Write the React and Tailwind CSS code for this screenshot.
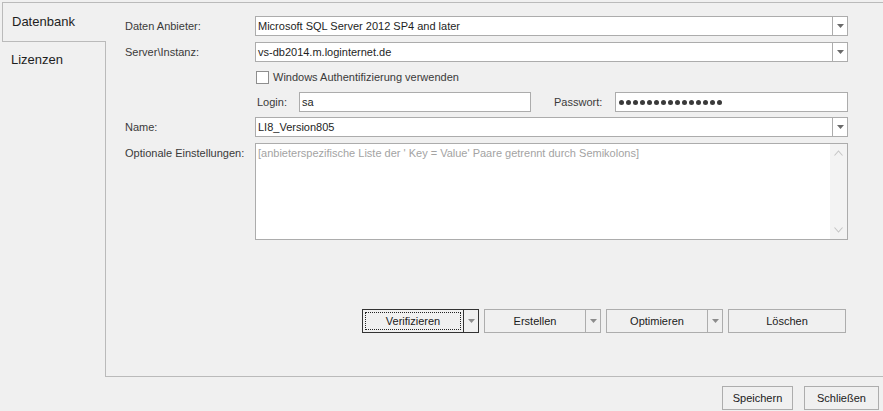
import React from 'react'

// ── kleine Glyphen ───────────────────────────────────────────
function DropArrow({ color = '#6a6a6a' }) {
  return (
    <svg width="7" height="4" viewBox="0 0 7 4" className="block">
      <path d="M0 0 H7 L3.5 4 Z" fill={color} />
    </svg>
  )
}

function Chevron({ up }) {
  return (
    <svg width="9" height="6" viewBox="0 0 9 6" className="block">
      <path d={up ? 'M0.5 5.5 L4.5 1 L8.5 5.5' : 'M0.5 0.5 L4.5 5 L8.5 0.5'} fill="none" stroke="#c6c6c6" strokeWidth="1.1" />
    </svg>
  )
}

// ── Combo-Box ────────────────────────────────────────────────
function Combo({ value }) {
  return (
    <div className="flex h-[20px] w-[593px] border border-[#acacac] bg-white">
      <div className="flex-1 flex items-center pl-[2px] text-[#1e1e1e]">{value}</div>
      <div className="w-[15px] border-l border-[#acacac] flex items-center justify-center">
        <DropArrow />
      </div>
    </div>
  )
}

function Label({ children }) {
  return <div className="w-[130px] shrink-0 text-[#3a3a3a] leading-[20px]">{children}</div>
}

// ── Buttons ──────────────────────────────────────────────────
function SplitButton({ label, focused }) {
  const border = focused ? 'border-[#333333]' : 'border-[#adadad]'
  return (
    <div className={`flex h-[24px] w-[117px] border ${border} bg-[#f0f0f0]`}>
      <div className="flex-1 p-[2px]">
        <div className={`h-full flex items-center justify-center text-[#202020] ${focused ? 'border border-dotted border-[#222]' : ''}`}>
          {label}
        </div>
      </div>
      <div className={`w-[15px] border-l ${border} flex items-center justify-center`}>
        <DropArrow color="#8c8c8c" />
      </div>
    </div>
  )
}

function Button({ label, w = 'w-[117px]' }) {
  return (
    <div className={`h-[24px] ${w} border border-[#adadad] bg-[#f0f0f0] flex items-center justify-center text-[#202020]`}>
      {label}
    </div>
  )
}

// ── Dialog ───────────────────────────────────────────────────
export default function App() {
  return (
    <div className="w-[883px] h-[411px] bg-[#f0f0f0] flex flex-col font-['Liberation_Sans',Arial,sans-serif] text-[11px] overflow-hidden">
      <div className="flex h-[375px] mt-[2px] ml-[2px]">
        {/* Tabs */}
        <div className="flex flex-col w-[104px] shrink-0">
          <div className="h-[40px] border-l border-t border-b border-[#bababa] flex items-center pl-[9px] text-[13px] text-[#1e1e1e]">
            Datenbank
          </div>
          <div className="flex-1 border-r border-[#bababa] pl-[9px] pt-[10px] text-[13px] text-[#1e1e1e] leading-[16px]">
            Lizenzen
          </div>
        </div>

        {/* Panel */}
        <div className="flex-1 border-t border-b border-[#bababa] pl-[19px] pt-[13px] flex flex-col">
          <div className="flex">
            <Label>Daten Anbieter:</Label>
            <Combo value="Microsoft SQL Server 2012 SP4 and later" />
          </div>
          <div className="flex mt-[6px]">
            <Label>Server\Instanz:</Label>
            <Combo value="vs-db2014.m.loginternet.de" />
          </div>
          <div className="flex mt-[9px] h-[13px] items-center">
            <div className="w-[131px] shrink-0" />
            <div className="w-[13px] h-[13px] border border-[#8e8e8e] bg-white" />
            <span className="ml-[4px] text-[#3a3a3a]">Windows Authentifizierung verwenden</span>
          </div>
          <div className="flex mt-[8px]">
            <div className="w-[130px] shrink-0" />
            <div className="w-[44px] pl-[2px] leading-[20px] text-[#3a3a3a]">Login:</div>
            <div className="w-[232px] h-[20px] border border-[#acacac] bg-white flex items-center pl-[2px] text-[#1e1e1e]">sa</div>
            <div className="w-[23px]" />
            <div className="w-[61px] leading-[20px] text-[#3a3a3a]">Passwort:</div>
            <div className="w-[233px] h-[20px] border border-[#acacac] bg-white flex items-center pl-[3px] gap-[2px]">
              {Array.from({ length: 15 }).map((_, i) => (
                <span key={i} className="w-[5px] h-[5px] rounded-full bg-[#3a3a3a]" />
              ))}
            </div>
          </div>
          <div className="flex mt-[5px]">
            <Label>Name:</Label>
            <Combo value="LI8_Version805" />
          </div>
          <div className="flex mt-[6px]">
            <Label>Optionale Einstellungen:</Label>
            <div className="flex h-[97px] w-[593px] border border-[#acacac] bg-white">
              <div className="flex-1 pl-[2px] pt-[2px] text-[#a3a3a3] leading-[14px]">
                [anbieterspezifische Liste der ' Key = Value' Paare getrennt durch Semikolons]
              </div>
              <div className="w-[17px] bg-[#f3f3f3] flex flex-col items-center justify-between py-[6px]">
                <Chevron up />
                <Chevron />
              </div>
            </div>
          </div>
          <div className="flex mt-[69px] w-[723px] justify-end gap-[5px] pr-[2px]">
            <SplitButton label="Verifizieren" focused />
            <SplitButton label="Erstellen" />
            <SplitButton label="Optimieren" />
            <Button label="Löschen" w="w-[118px]" />
          </div>
        </div>
      </div>

      {/* Fußleiste */}
      <div className="flex justify-end gap-[11px] mt-[9px] pr-[4px]">
        <Button label="Speichern" w="w-[71px]" />
        <Button label="Schließen" w="w-[75px]" />
      </div>
    </div>
  )
}
